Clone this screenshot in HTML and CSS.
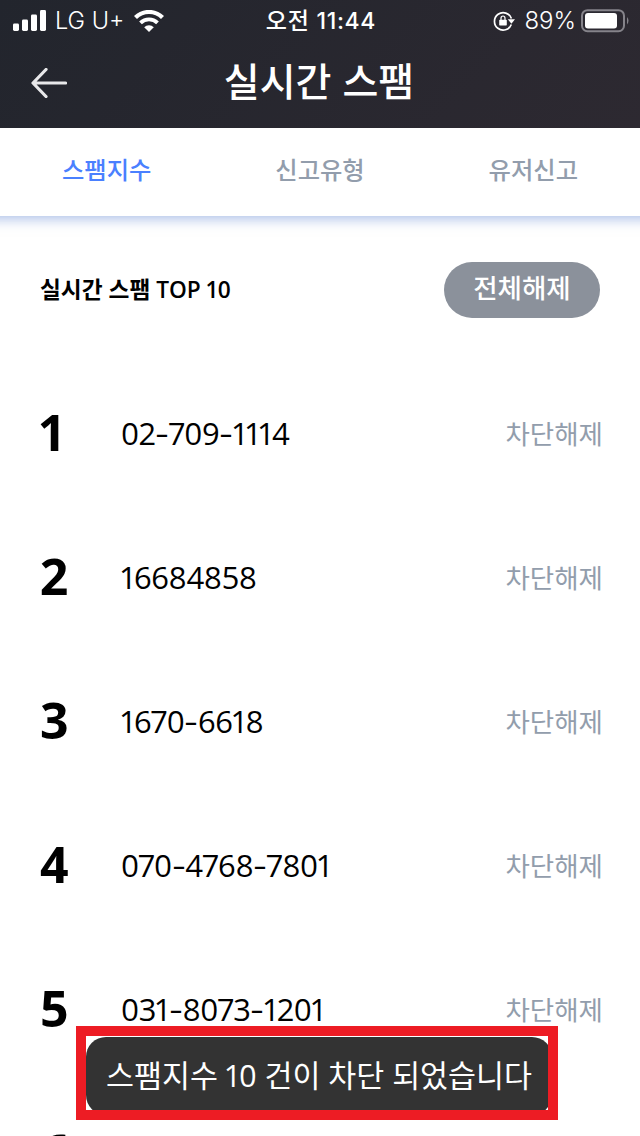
FILE: index.html
```html
<!DOCTYPE html>
<html lang="ko">
<head>
  <meta charset="utf-8">
  <title>실시간 스팸</title>
  <link rel="stylesheet" href="styles.css">
</head>
<body>
  <div class="header">
    <div class="status-bar">
      <div class="status-left">
        <svg class="signal" width="33" height="22" viewBox="0 0 33 22">
          <rect x="0" y="13.5" width="6" height="7.5" rx="1.4"/>
          <rect x="9" y="9.500" width="6" height="11.5" rx="1.4"/>
          <rect x="18" y="4.500" width="6" height="16.5" rx="1.4"/>
          <rect x="27" y="0" width="6" height="21" rx="1.4"/>
        </svg>
        <span class="carrier">LG U+</span>
        <svg class="wifi" width="30" height="22" viewBox="0 0 30 22">
          <path d="M1.500 7.600A19 19 0 0 1 28.500 7.600" fill="none" stroke="#fff" stroke-width="4.200"/>
          <path d="M6.500 12.900A12 12 0 0 1 23.500 12.900" fill="none" stroke="#fff" stroke-width="3.800"/>
          <path d="M15 22L10.200 17.200A6.800 6.800 0 0 1 19.800 17.200Z"/>
        </svg>
      </div>
      <div class="time">오전 11:44</div>
      <div class="status-right">
        <svg class="lock" width="22" height="20" viewBox="0 0 22 20">
          <path d="M18.300 13.500A8.700 8.700 0 1 1 18.400 7.500" fill="none" stroke="#fff" stroke-width="1.700"/>
          <path d="M14.800 8.200H22L18.400 12.800Z"/>
          <rect x="6.200" y="8.800" width="7.600" height="5.600" rx=".6"/>
          <path d="M8 9V7.200A2 2.200 0 0 1 12 7.200V9" fill="none" stroke="#fff" stroke-width="1.200"/>
        </svg>
        <span class="percent">89%</span>
        <svg class="battery" width="48" height="24" viewBox="0 0 48 24">
          <rect x="1" y="1.200" width="42" height="21" rx="5.500" fill="none" stroke="#85838a" stroke-width="2"/>
          <rect x="4" y="4" width="32" height="15.500" rx="3"/>
          <path d="M46 8Q49 11.700 46 15.500Z" fill="#85838a"/>
        </svg>
      </div>
    </div>
    <div class="title-bar">
      <svg class="back" width="36" height="30" viewBox="0 0 36 30">
        <path d="M15 1.500L2 15L15 28.500M2.500 15H34.500" fill="none" stroke="#e8e8ea" stroke-width="3.200" stroke-linecap="round" stroke-linejoin="round"/>
      </svg>
      <h1>실시간 스팸</h1>
    </div>
  </div>

  <div class="tabs">
    <div class="tab active">스팸지수</div>
    <div class="tab">신고유형</div>
    <div class="tab">유저신고</div>
  </div>

  <div class="top">
    <h2>실시간 스팸 TOP 10</h2>
    <div class="button">전체해제</div>
  </div>

  <div class="list">
    <div class="row">
      <div class="rank">1</div>
      <div class="number">02<span class="dash">-</span>709<span class="dash">-</span>1114</div>
      <div class="unblock">차단해제</div>
    </div>
    <div class="row">
      <div class="rank">2</div>
      <div class="number">16684858</div>
      <div class="unblock">차단해제</div>
    </div>
    <div class="row">
      <div class="rank">3</div>
      <div class="number">1670<span class="dash">-</span>6618</div>
      <div class="unblock">차단해제</div>
    </div>
    <div class="row">
      <div class="rank">4</div>
      <div class="number">070<span class="dash">-</span>4768<span class="dash">-</span>7801</div>
      <div class="unblock">차단해제</div>
    </div>
    <div class="row">
      <div class="rank">5</div>
      <div class="number">031<span class="dash">-</span>8073<span class="dash">-</span>1201</div>
      <div class="unblock">차단해제</div>
    </div>
    <div class="row">
      <div class="rank">6</div>
    </div>
  </div>

  <div class="toast-frame">
    <div class="toast">스팸지수 10 건이 차단 되었습니다</div>
  </div>
</body>
</html>
```
FILE: styles.css
```css
body {
  position: relative;
  width: 640px;
  height: 1136px;
  margin: 0;
  overflow: hidden;
  background-color: #fff;
  color: #000;
  font-family: "Noto Sans CJK KR", sans-serif;
}

svg {
  display: block;
  fill: #fff;
}

.header {
  position: relative;
  z-index: 1;
  height: 128px;
  background: linear-gradient(135deg, #22252d, #2d2931);
  color: #fff;
}

.status-bar {
  display: grid;
  grid-template-columns: 1fr auto 1fr;
  align-items: center;
  height: 40px;
  padding: 0 11px 0 13px;
  font-family: Inter, "Noto Sans CJK KR", sans-serif;
  font-size: 24px;
  line-height: 42px;
}

.status-left,
.status-right {
  display: flex;
  align-items: center;
}

.status-right {
  justify-content: flex-end;
}

.carrier {
  margin: 0 10px 0 9px;
  font-size: 23.5px;
  font-weight: 350;
}

.time {
  font-size: 23px;
  font-weight: 500;
  letter-spacing: .7px;
}

.percent {
  margin: 0 5px 0 9px;
  font-weight: 350;
}

.title-bar {
  display: grid;
  grid-template-columns: 1fr auto 1fr;
  align-items: center;
  height: 86px;
  padding: 0 31px;
}

h1 {
  margin: 0 2px 8px 0;
  font-size: 39px;
  font-weight: 500;
  line-height: 78px;
}

.tabs {
  display: flex;
  height: 88px;
  box-shadow: 0 4px 12px -1px rgba(90, 130, 210, .5);
  /* keeps the shadow even up to the screen edges */
  margin: 0 -20px;
  padding: 0 20px;
}

.tab {
  flex: 1;
  color: #929dac;
  font-size: 24.3px;
  font-weight: 500;
  line-height: 81px;
  text-align: center;
}

.tab.active {
  color: #4a80ff;
}

.top {
  display: flex;
  align-items: center;
  justify-content: space-between;
  height: 56px;
  padding: 46px 40px 43px;
}

h2 {
  margin: 0 0 4px;
  font-family: "Open Sans", "Noto Sans CJK KR", sans-serif;
  font-size: 22.7px;
  font-weight: 600;
  font-variant-numeric: proportional-nums;
}

.button {
  width: 156px;
  height: 56px;
  border-radius: 28px;
  background-color: #8b919b;
  color: #fff;
  font-size: 26.5px;
  font-weight: 500;
  line-height: 49px;
  text-align: center;
}

.row {
  display: flex;
  align-items: center;
  height: 144px;
  padding: 0 37px 0 40px;
  font-family: "Open Sans", "Noto Sans CJK KR", sans-serif;
  font-variant-numeric: proportional-nums;
}

.rank {
  width: 81px;
  margin-bottom: 3px;
  font-size: 50px;
  font-weight: 700;
}

.number {
  flex: 1;
  font-size: 31px;
  letter-spacing: -.4px;
}

.dash {
  display: inline-block;
  margin: -1px 2px 1px;
  transform: translateY(-1px) scaleX(1.35);
}

.unblock {
  margin-bottom: 2px;
  color: #929dac;
  font-family: "Noto Sans CJK KR", sans-serif;
  font-size: 26.5px;
}

.toast-frame {
  position: absolute;
  top: 1026px;
  left: 76px;
  box-sizing: border-box;
  width: 482px;
  height: 94px;
  padding-top: 1px;
  border: 10px solid #ed1c24;
  background-color: #fff;
  overflow: hidden;
}

.toast {
  width: 466px;
  height: 78px;
  border-radius: 20px;
  background-color: #333;
  color: #fff;
  font-family: "Open Sans", "Noto Sans CJK KR", sans-serif;
  font-size: 30.4px;
  font-variant-numeric: proportional-nums;
  line-height: 77px;
  text-align: center;
  white-space: nowrap;
}
```
